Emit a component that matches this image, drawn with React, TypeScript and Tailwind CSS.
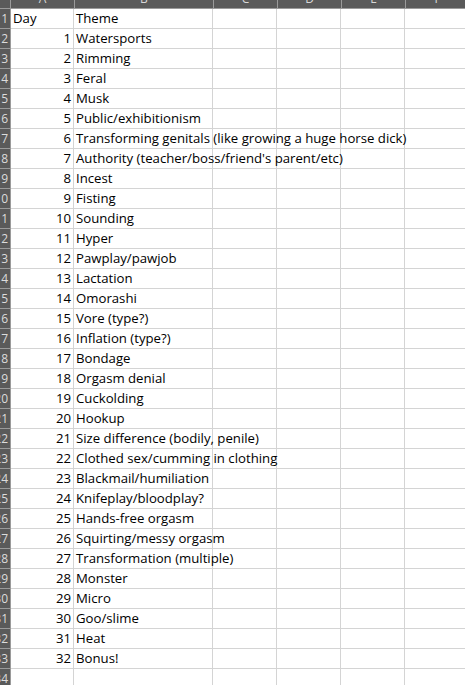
import React from "react";

const themes = [
  "Watersports",
  "Rimming",
  "Feral",
  "Musk",
  "Public/exhibitionism",
  "Transforming genitals (like growing a huge horse dick)",
  "Authority (teacher/boss/friend's parent/etc)",
  "Incest",
  "Fisting",
  "Sounding",
  "Hyper",
  "Pawplay/pawjob",
  "Lactation",
  "Omorashi",
  "Vore (type?)",
  "Inflation (type?)",
  "Bondage",
  "Orgasm denial",
  "Cuckolding",
  "Hookup",
  "Size difference (bodily, penile)",
  "Clothed sex/cumming in clothing",
  "Blackmail/humiliation",
  "Knifeplay/bloodplay?",
  "Hands-free orgasm",
  "Squirting/messy orgasm",
  "Transformation (multiple)",
  "Monster",
  "Micro",
  "Goo/slime",
  "Heat",
  "Bonus!",
];

const rows: { a: string; b: string }[] = [
  { a: "Day", b: "Theme" },
  ...themes.map((t, i) => ({ a: String(i + 1), b: t })),
  { a: "", b: "" },
  { a: "", b: "" },
];

const cols = ["A", "B", "C", "D", "E", "F"];
const widths = ["w-[64px]", "w-[139px]", "w-[64px]", "w-[64px]", "w-[64px]", "w-[64px]"];

const App: React.FC = () => {
  return (
    <div className="w-[465px] h-[685px] overflow-hidden bg-white text-black font-['Open_Sans',sans-serif] text-[13.2px]">
      {/* column header strip */}
      <div className="flex h-[9px] bg-[#5a5a5a] border-b border-[#9a9a9a]">
        <div className="w-[11px] shrink-0 border-r border-[#9a9a9a]"></div>
        {cols.map((c, i) => (
          <div
            key={c}
            className={`${widths[i]} shrink-0 border-r border-[#9a9a9a] overflow-hidden relative`}
          >
            <div className="absolute inset-x-0 -top-[9px] text-center text-[#d8d8d8] text-[12px] leading-[16px]">{c}</div>
          </div>
        ))}
      </div>

      {rows.map((r, idx) => (
        <div key={idx} className="flex h-[20px]">
          <div className="w-[11px] shrink-0 bg-[#5a5a5a] border-b border-r border-[#9a9a9a] overflow-hidden relative">
            <div className="absolute right-[2px] top-0 text-[#dcdcdc] text-[12px] leading-[19px]">{idx + 1}</div>
          </div>
          <div className="w-[63px] shrink-0 border-r border-b border-[#d4d4d4] leading-[19px] px-[2px] whitespace-nowrap">
            {idx === 0 ? (
              <div className="text-left">{r.a}</div>
            ) : (
              <div className="text-right">{r.a}</div>
            )}
          </div>
          <div className="w-[139px] shrink-0 border-r border-b border-[#d4d4d4] leading-[19px] px-[2px] whitespace-nowrap overflow-visible relative z-10">
            {r.b}
          </div>
          {[0, 1, 2, 3].map((k) => (
            <div key={k} className="w-[64px] shrink-0 border-r border-b border-[#d4d4d4]"></div>
          ))}
        </div>
      ))}
    </div>
  );
};

export default App;
